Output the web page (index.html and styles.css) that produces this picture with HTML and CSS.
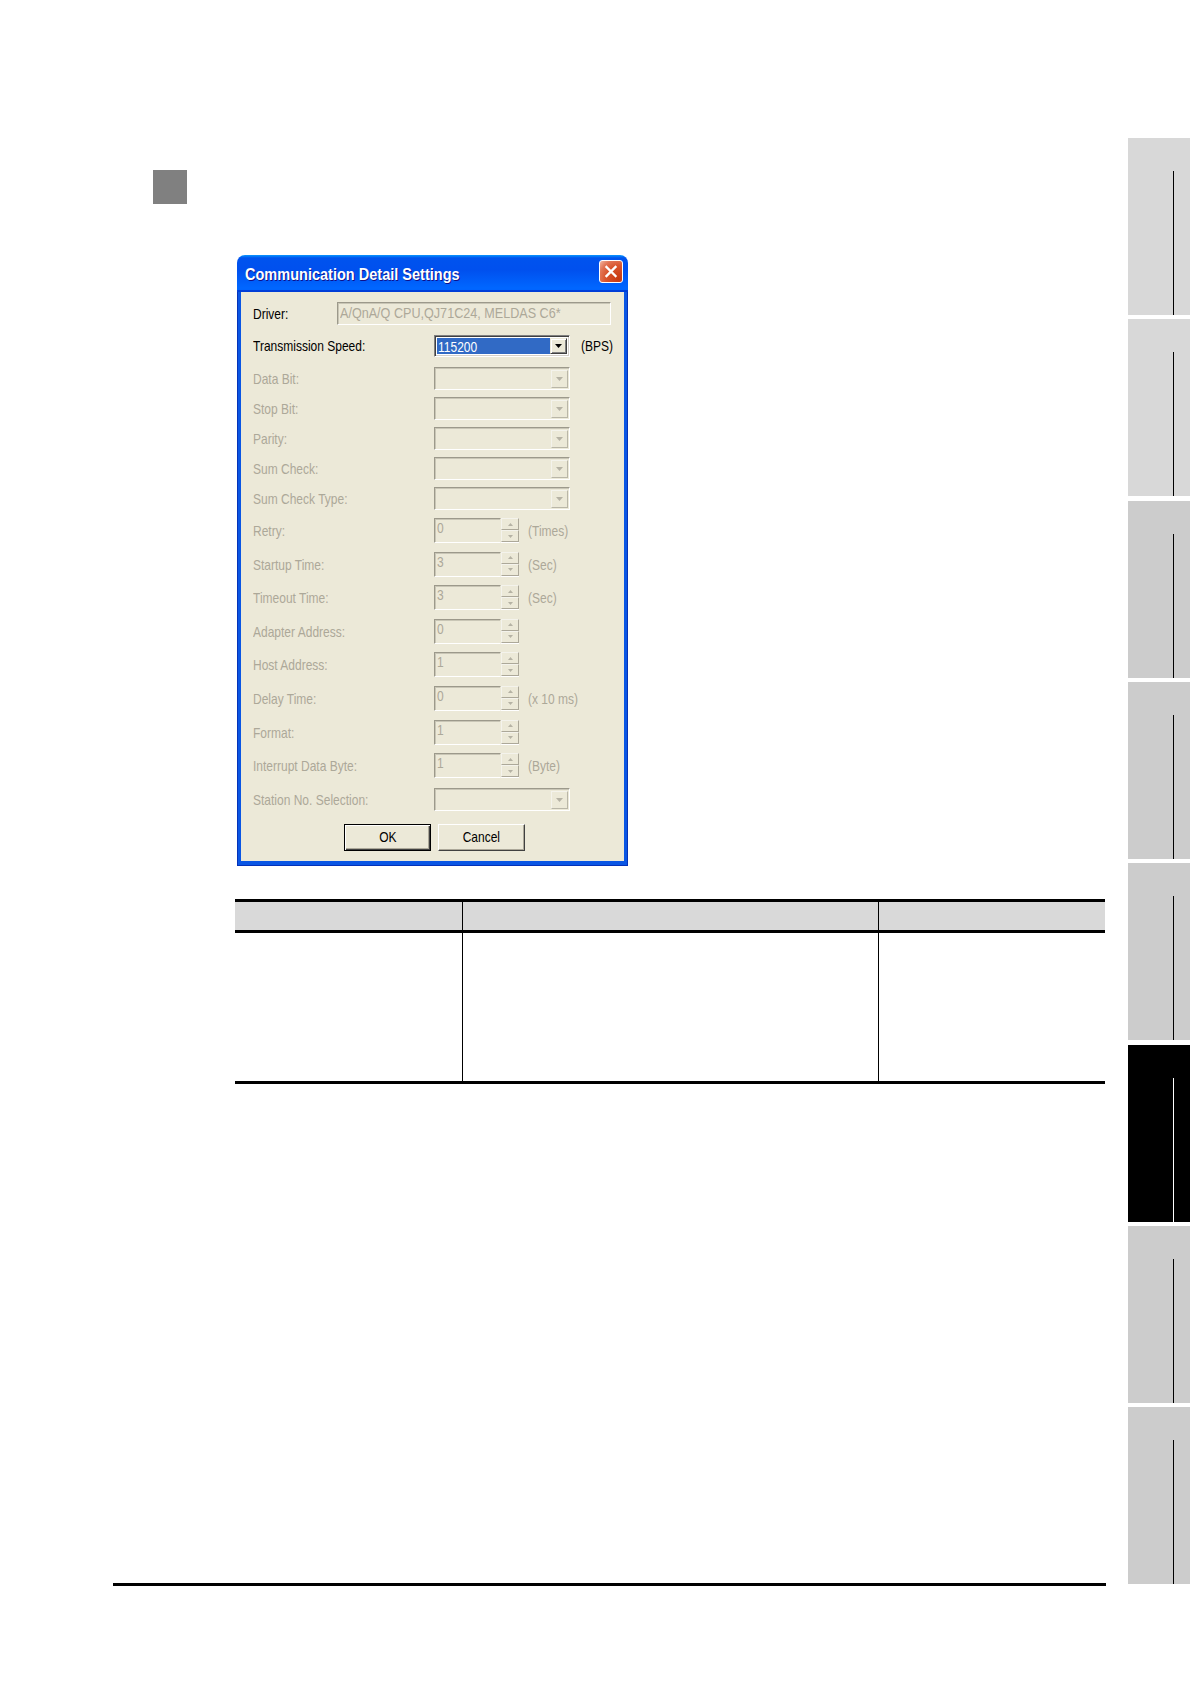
FILE: index.html
```html
<!DOCTYPE html>
<html>
<head>
<meta charset="utf-8">
<title>Communication Detail Settings</title>
<link rel="stylesheet" href="styles.css">
</head>
<body>
<div class="page">
  <div class="main">
    <div class="marker"></div>

    <div class="dialog">
      <div class="titlebar">
        <span class="title">Communication Detail Settings</span>
        <span class="close">
          <svg width="22" height="21" viewBox="0 0 22 21"><path d="M6.5 6 L15.5 15 M15.5 6 L6.5 15" stroke="#fff" stroke-width="2.4" stroke-linecap="square" fill="none"/></svg>
        </span>
      </div>
      <div class="frame">
        <div class="client">
          <div class="row row-driver">
            <span class="label label-on label-driver nar">Driver:</span>
            <div class="textbox textbox-driver"><span class="nar nar-wide">A/QnA/Q CPU,QJ71C24, MELDAS C6*</span></div>
          </div>

          <div class="row row-speed">
            <span class="label label-on nar">Transmission Speed:</span>
            <div class="combo combo-on">
              <span class="combo-value"><span class="nar">115200</span></span>
              <span class="drop drop-on"><svg width="7" height="4" viewBox="0 0 7 4"><path d="M0 0 H7 L3.5 4 Z" fill="#000"/></svg></span>
            </div>
            <span class="unit unit-on nar">(BPS)</span>
          </div>

          <div class="row">
            <span class="label nar">Data Bit:</span>
            <div class="combo"><span class="drop"><svg width="7" height="4" viewBox="0 0 7 4"><path d="M0 0 H7 L3.5 4 Z" fill="#b5b2a4"/></svg></span></div>
          </div>
          <div class="row">
            <span class="label nar">Stop Bit:</span>
            <div class="combo"><span class="drop"><svg width="7" height="4" viewBox="0 0 7 4"><path d="M0 0 H7 L3.5 4 Z" fill="#b5b2a4"/></svg></span></div>
          </div>
          <div class="row">
            <span class="label nar">Parity:</span>
            <div class="combo"><span class="drop"><svg width="7" height="4" viewBox="0 0 7 4"><path d="M0 0 H7 L3.5 4 Z" fill="#b5b2a4"/></svg></span></div>
          </div>
          <div class="row">
            <span class="label nar">Sum Check:</span>
            <div class="combo"><span class="drop"><svg width="7" height="4" viewBox="0 0 7 4"><path d="M0 0 H7 L3.5 4 Z" fill="#b5b2a4"/></svg></span></div>
          </div>
          <div class="row row-sumtype">
            <span class="label nar">Sum Check Type:</span>
            <div class="combo"><span class="drop"><svg width="7" height="4" viewBox="0 0 7 4"><path d="M0 0 H7 L3.5 4 Z" fill="#b5b2a4"/></svg></span></div>
          </div>

          <div class="row row-spin">
            <span class="label label-spin nar">Retry:</span>
            <div class="spin"><div class="spin-field"><span class="nar">0</span></div><div class="spin-buttons"><span class="spin-btn"><svg width="5" height="3" viewBox="0 0 5 3"><path d="M0 3 H5 L2.5 0 Z" fill="#b5b2a4"/></svg></span><span class="spin-btn"><svg width="5" height="3" viewBox="0 0 5 3"><path d="M0 0 H5 L2.5 3 Z" fill="#b5b2a4"/></svg></span></div></div>
            <span class="unit unit-spin nar">(Times)</span>
          </div>
          <div class="row row-spin">
            <span class="label label-spin nar">Startup Time:</span>
            <div class="spin"><div class="spin-field"><span class="nar">3</span></div><div class="spin-buttons"><span class="spin-btn"><svg width="5" height="3" viewBox="0 0 5 3"><path d="M0 3 H5 L2.5 0 Z" fill="#b5b2a4"/></svg></span><span class="spin-btn"><svg width="5" height="3" viewBox="0 0 5 3"><path d="M0 0 H5 L2.5 3 Z" fill="#b5b2a4"/></svg></span></div></div>
            <span class="unit unit-spin nar">(Sec)</span>
          </div>
          <div class="row row-spin">
            <span class="label label-spin nar">Timeout Time:</span>
            <div class="spin"><div class="spin-field"><span class="nar">3</span></div><div class="spin-buttons"><span class="spin-btn"><svg width="5" height="3" viewBox="0 0 5 3"><path d="M0 3 H5 L2.5 0 Z" fill="#b5b2a4"/></svg></span><span class="spin-btn"><svg width="5" height="3" viewBox="0 0 5 3"><path d="M0 0 H5 L2.5 3 Z" fill="#b5b2a4"/></svg></span></div></div>
            <span class="unit unit-spin nar">(Sec)</span>
          </div>
          <div class="row row-spin">
            <span class="label label-spin nar">Adapter Address:</span>
            <div class="spin"><div class="spin-field"><span class="nar">0</span></div><div class="spin-buttons"><span class="spin-btn"><svg width="5" height="3" viewBox="0 0 5 3"><path d="M0 3 H5 L2.5 0 Z" fill="#b5b2a4"/></svg></span><span class="spin-btn"><svg width="5" height="3" viewBox="0 0 5 3"><path d="M0 0 H5 L2.5 3 Z" fill="#b5b2a4"/></svg></span></div></div>
          </div>
          <div class="row row-spin">
            <span class="label label-spin nar">Host Address:</span>
            <div class="spin"><div class="spin-field"><span class="nar">1</span></div><div class="spin-buttons"><span class="spin-btn"><svg width="5" height="3" viewBox="0 0 5 3"><path d="M0 3 H5 L2.5 0 Z" fill="#b5b2a4"/></svg></span><span class="spin-btn"><svg width="5" height="3" viewBox="0 0 5 3"><path d="M0 0 H5 L2.5 3 Z" fill="#b5b2a4"/></svg></span></div></div>
          </div>
          <div class="row row-spin">
            <span class="label label-spin nar">Delay Time:</span>
            <div class="spin"><div class="spin-field"><span class="nar">0</span></div><div class="spin-buttons"><span class="spin-btn"><svg width="5" height="3" viewBox="0 0 5 3"><path d="M0 3 H5 L2.5 0 Z" fill="#b5b2a4"/></svg></span><span class="spin-btn"><svg width="5" height="3" viewBox="0 0 5 3"><path d="M0 0 H5 L2.5 3 Z" fill="#b5b2a4"/></svg></span></div></div>
            <span class="unit unit-spin nar">(x 10 ms)</span>
          </div>
          <div class="row row-spin">
            <span class="label label-spin nar">Format:</span>
            <div class="spin"><div class="spin-field"><span class="nar">1</span></div><div class="spin-buttons"><span class="spin-btn"><svg width="5" height="3" viewBox="0 0 5 3"><path d="M0 3 H5 L2.5 0 Z" fill="#b5b2a4"/></svg></span><span class="spin-btn"><svg width="5" height="3" viewBox="0 0 5 3"><path d="M0 0 H5 L2.5 3 Z" fill="#b5b2a4"/></svg></span></div></div>
          </div>
          <div class="row row-spin row-interrupt">
            <span class="label label-spin nar">Interrupt Data Byte:</span>
            <div class="spin"><div class="spin-field"><span class="nar">1</span></div><div class="spin-buttons"><span class="spin-btn"><svg width="5" height="3" viewBox="0 0 5 3"><path d="M0 3 H5 L2.5 0 Z" fill="#b5b2a4"/></svg></span><span class="spin-btn"><svg width="5" height="3" viewBox="0 0 5 3"><path d="M0 0 H5 L2.5 3 Z" fill="#b5b2a4"/></svg></span></div></div>
            <span class="unit unit-spin nar">(Byte)</span>
          </div>

          <div class="row row-station">
            <span class="label nar">Station No. Selection:</span>
            <div class="combo"><span class="drop"><svg width="7" height="4" viewBox="0 0 7 4"><path d="M0 0 H7 L3.5 4 Z" fill="#b5b2a4"/></svg></span></div>
          </div>

          <div class="buttons">
            <span class="btn btn-default"><span class="nar nar-center">OK</span></span>
            <span class="btn"><span class="nar nar-center">Cancel</span></span>
          </div>
        </div>
      </div>
    </div>

    <div class="table">
      <div class="trow thead">
        <div class="cell"></div>
        <div class="cell cell-div"></div>
        <div class="cell cell-div"></div>
      </div>
      <div class="trow tbody">
        <div class="cell"></div>
        <div class="cell cell-div"></div>
        <div class="cell cell-div"></div>
      </div>
    </div>

    <div class="footer-line"></div>
  </div>

  <div class="sidebar">
    <div class="tab tab-light"><div class="tab-line"></div></div>
    <div class="tab tab-light"><div class="tab-line"></div></div>
    <div class="tab"><div class="tab-line"></div></div>
    <div class="tab"><div class="tab-line"></div></div>
    <div class="tab"><div class="tab-line"></div></div>
    <div class="tab tab-active"><div class="tab-line"></div></div>
    <div class="tab"><div class="tab-line"></div></div>
    <div class="tab"><div class="tab-line"></div></div>
  </div>
</div>
</body>
</html>
```

FILE: styles.css
```css
html, body {
  margin: 0;
  padding: 0;
  background: #ffffff;
}

.page {
  width: 1190px;
  height: 1684px;
  display: flex;
  font-family: "Liberation Sans", Arial, sans-serif;
}

.main {
  width: 1128px;
  flex: none;
  padding-top: 170px;
  box-sizing: border-box;
}

.marker {
  width: 34px;
  height: 34px;
  margin-left: 153px;
  background: #808080;
}

/* narrow text (the dialog uses a condensed face) */
.nar {
  display: inline-block;
  transform: scaleX(0.8);
  transform-origin: 0 50%;
  white-space: nowrap;
}

.nar-wide {
  transform: scaleX(0.84);
}

.nar-center {
  transform-origin: 50% 50%;
}

/* ---------- dialog ---------- */
.dialog {
  width: 391px;
  margin-left: 237px;
  margin-top: 51px;
  display: flex;
  flex-direction: column;
}

.titlebar {
  height: 37px;
  box-sizing: border-box;
  border-radius: 8px 8px 0 0;
  background: linear-gradient(180deg, #0997ff 0%, #0053ee 8%, #0050ee 40%, #0066ff 88%, #0066ff 93%, #005bff 95%, #003dd7 96%, #003dd7 100%);
  display: flex;
  justify-content: space-between;
  align-items: flex-start;
  padding: 0 5px 0 8px;
}

.title {
  display: inline-block;
  margin-top: 8px;
  font-family: "Liberation Sans", "DejaVu Sans", sans-serif;
  font-weight: bold;
  font-size: 16.5px;
  line-height: 22px;
  color: #ffffff;
  text-shadow: 1px 1px #0f1089;
  white-space: nowrap;
  transform: scaleX(0.88);
  transform-origin: 0 50%;
  width: 300px;
}

.close {
  margin-top: 5px;
  width: 24px;
  height: 23px;
  box-sizing: border-box;
  border: 1px solid #ffffff;
  border-radius: 3px;
  background: radial-gradient(circle at 85% 85%, #c73a12 0%, #d9542c 50%, #e27656 75%, #f2b8a4 100%);
  display: flex;
  align-items: center;
  justify-content: center;
}

.frame {
  background: #0a56e4;
  padding: 0 4px 5px 4px;
  box-shadow: inset 1px 0 #0532b8, inset -1px 0 #0532b8, inset 0 -1px #0532b8;
}

.client {
  background: #ece9d8;
  padding: 10px 0 10px 12px;
  height: 569px;
  box-sizing: border-box;
}

.row {
  display: flex;
  align-items: flex-start;
  height: 30px;
}

.row-driver { height: 33px; }
.row-speed { height: 32px; }
.row-sumtype { height: 31px; }
.row-spin { height: 33.6px; }
.row-spin.row-interrupt { height: 35px; }
.row-station { height: 36px; }

.label {
  width: 181px;
  flex: none;
  font-size: 15px;
  line-height: 23px;
  color: #aca899;
}

.label-on { color: #000000; }
.label-driver { width: 84px; }
.row-speed .label { line-height: 22px; }
.label-spin { line-height: 25px; }

.unit {
  margin-left: 11px;
  font-size: 15px;
  color: #aca899;
}

.unit-on {
  color: #000000;
  line-height: 22px;
}

.unit-spin {
  margin-left: 9px;
  line-height: 25px;
}

/* text box */
.textbox {
  box-sizing: border-box;
  height: 23px;
  border: 1px solid;
  border-color: #9c998b #ffffff #ffffff #9c998b;
  box-shadow: inset 1px 1px #c9c6b6;
  background: #ece9d8;
  color: #aca899;
  font-size: 15px;
  line-height: 19px;
  padding-left: 2px;
  white-space: nowrap;
  overflow: hidden;
}

.textbox-driver { width: 274px; }

/* combo box */
.combo {
  box-sizing: border-box;
  width: 136px;
  height: 23px;
  border: 1px solid;
  border-color: #9c998b #ffffff #ffffff #9c998b;
  box-shadow: inset 1px 1px #c9c6b6;
  background: #ece9d8;
  display: flex;
  justify-content: flex-end;
  padding: 2px 1px 1px 2px;
}

.combo-on {
  height: 22px;
  border-color: #808080 #ffffff #ffffff #808080;
  box-shadow: inset 1px 1px #404040, inset -1px -1px #d4d0c8;
  background: #ffffff;
  padding: 2px;
}

.combo-value {
  flex: 1;
  background: #316ac5;
  color: #ffffff;
  font-size: 15px;
  line-height: 17px;
  padding-left: 1px;
  overflow: hidden;
}

.drop {
  width: 17px;
  flex: none;
  box-sizing: border-box;
  border: 1px solid;
  border-color: #f4f3ec #b9b6a8 #b9b6a8 #f4f3ec;
  background: #ece9d8;
  display: flex;
  align-items: center;
  justify-content: center;
}

.drop-on {
  border-color: #ece9d8 #404040 #404040 #ece9d8;
  box-shadow: inset 1px 1px #ffffff, inset -1px -1px #808080;
}

/* spinner */
.spin {
  display: flex;
}

.spin-field {
  box-sizing: border-box;
  width: 67px;
  height: 25px;
  border: 1px solid;
  border-color: #9c998b transparent #ffffff #9c998b;
  box-shadow: inset 1px 1px #c9c6b6;
  background: #ece9d8;
  color: #aca899;
  font-size: 15px;
  line-height: 18px;
  padding-left: 2px;
}

.spin-buttons {
  width: 18px;
  height: 25px;
  display: flex;
  flex-direction: column;
  border-bottom: 1px solid #ffffff;
  box-sizing: border-box;
}

.spin-btn {
  flex: 1;
  box-sizing: border-box;
  border: 1px solid;
  border-color: #f4f3ec #aca899 #aca899 #f4f3ec;
  background: #ece9d8;
  display: flex;
  align-items: center;
  justify-content: center;
}

/* buttons */
.buttons {
  display: flex;
  gap: 7px;
  padding-left: 91px;
}

.btn {
  box-sizing: border-box;
  width: 87px;
  height: 27px;
  border: 1px solid;
  border-color: #ffffff #404040 #404040 #ffffff;
  box-shadow: inset -1px -1px #aca899;
  background: #ece9d8;
  font-size: 15px;
  line-height: 24px;
  text-align: center;
  color: #000000;
}

.btn-default {
  border: 1px solid #000000;
  box-shadow: inset 1px 1px #ffffff, inset -1px -1px #404040, inset -2px -2px #aca899;
}

/* ---------- table ---------- */
.table {
  margin-top: 33px;
  margin-left: 235px;
  width: 870px;
  border-top: 3px solid #000000;
  border-bottom: 3px solid #000000;
}

.trow {
  display: grid;
  grid-template-columns: 227px 416px 227px;
}

.thead {
  height: 31px;
  box-sizing: border-box;
  background: #d9d9d9;
  border-bottom: 3px solid #000000;
}

.tbody {
  height: 148px;
}

.cell-div {
  border-left: 1px solid #000000;
}

.footer-line {
  margin-top: 499px;
  margin-left: 113px;
  width: 993px;
  height: 3px;
  background: #000000;
}

/* ---------- sidebar ---------- */
.sidebar {
  width: 62px;
  flex: none;
  padding-top: 138px;
  box-sizing: border-box;
  display: flex;
  flex-direction: column;
  gap: 4.33px;
}

.tab {
  height: 177px;
  box-sizing: border-box;
  padding-top: 33px;
  background: #cccccc;
}

.tab-light { background: #d8d8d8; }

.tab-active { background: #000000; }

.tab-line {
  margin-left: 45px;
  width: 1px;
  height: 144px;
  background: #000000;
}

.tab-active .tab-line { background: #ffffff; }
```
